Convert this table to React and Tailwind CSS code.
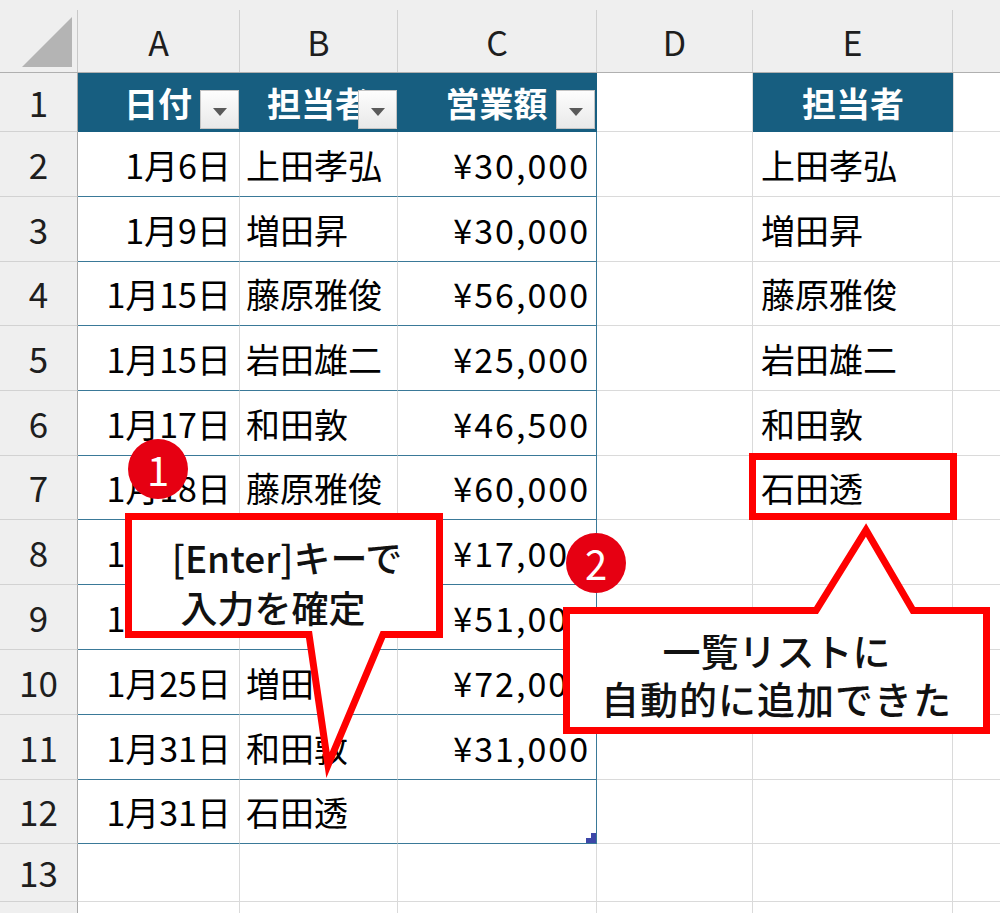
const font = "font-['Noto_Sans_CJK_JP',sans-serif]";

const rows = [
  { h: 'h-[65px]', a: '1月6日', b: '上田孝弘', c: '¥30,000', e: '上田孝弘' },
  { h: 'h-[65px]', a: '1月9日', b: '増田昇', c: '¥30,000', e: '増田昇' },
  { h: 'h-[64px]', a: '1月15日', b: '藤原雅俊', c: '¥56,000', e: '藤原雅俊' },
  { h: 'h-[65px]', a: '1月15日', b: '岩田雄二', c: '¥25,000', e: '岩田雄二' },
  { h: 'h-[65px]', a: '1月17日', b: '和田敦', c: '¥46,500', e: '和田敦' },
  { h: 'h-[64px]', a: '1月18日', b: '藤原雅俊', c: '¥60,000', e: '石田透' },
  { h: 'h-[65px]', a: '1月20日', b: '岩田雄二', c: '¥17,000', e: '' },
  { h: 'h-[65px]', a: '1月22日', b: '上田孝弘', c: '¥51,000', e: '' },
  { h: 'h-[65px]', a: '1月25日', b: '増田昇', c: '¥72,000', e: '' },
  { h: 'h-[65px]', a: '1月31日', b: '和田敦', c: '¥31,000', e: '' },
  { h: 'h-[64px]', a: '1月31日', b: '石田透', c: '', e: '', last: true },
];

const RowHead = ({ children }) => (
  <div className="w-[78px] shrink-0 bg-[#efefef] border-r border-b border-r-[#a9a9a9] border-b-[#d2d2d2] flex items-center justify-center text-[35px] text-[#1e1e1e]">
    {children}
  </div>
);

const FilterButton = ({ right }) => (
  <div className={`absolute ${right} top-[17px] w-[39px] h-[39px] border border-[#c4c4c4] bg-gradient-to-b from-[#fdfdfd] to-[#e9e9e9] flex items-center justify-center`}>
    <div className="mt-[4px] w-0 h-0 border-l-[7px] border-r-[7px] border-t-[8px] border-l-transparent border-r-transparent border-t-[#5a5a5a]" />
  </div>
);

const App = () => {
  return (
    <div className={`relative w-[1000px] h-[913px] overflow-hidden bg-white text-black ${font}`}>
      {/* column headers */}
      <div className="flex h-[73px] bg-[#efefef] border-b border-[#b0b0b0]">
        <div className="w-[78px] shrink-0 mt-[10px] border-r border-[#c8c8c8] relative">
          <svg className="absolute left-0 top-0" width="78" height="63" viewBox="0 0 78 63">
            <polygon points="22,57 72,57 72,7" fill="#b4b4b4" />
          </svg>
        </div>
        {[
          ['A', 'w-[162px]'],
          ['B', 'w-[158px]'],
          ['C', 'w-[199px]'],
          ['D', 'w-[156px]'],
          ['E', 'w-[200px]'],
        ].map(([l, w]) => (
          <div key={l} className={`${w} shrink-0 mt-[10px] border-r border-[#d0d0d0] flex items-center justify-center text-[34px] text-[#1e1e1e]`}>
            {l}
          </div>
        ))}
        <div className="flex-1 mt-[10px]" />
      </div>

      {/* row 1 : table header */}
      <div className="flex h-[59px]">
        <RowHead>1</RowHead>
        <div className="relative w-[162px] shrink-0 bg-[#175e80] border-b border-[#175e80] flex items-center justify-center pr-[2px] text-[34px] font-bold text-white">
          日付
          <FilterButton right="right-[1px]" />
        </div>
        <div className="relative w-[158px] shrink-0 bg-[#175e80] border-b border-[#175e80] flex items-center justify-center pr-[2px] text-[34px] font-bold text-white">
          担当者
          <FilterButton right="right-[1px]" />
        </div>
        <div className="relative w-[199px] shrink-0 bg-[#175e80] border-b border-[#175e80] flex items-center justify-center pr-[2px] text-[34px] font-bold text-white">
          営業額
          <FilterButton right="right-[2px]" />
        </div>
        <div className="w-[156px] shrink-0 border-r border-b border-[#dadada]" />
        <div className="w-[200px] shrink-0 bg-[#175e80] border-b border-[#175e80] flex items-center justify-center text-[34px] font-bold text-white">
          担当者
        </div>
        <div className="flex-1 border-l border-b border-[#dadada]" />
      </div>

      {/* rows 2-12 */}
      {rows.map((r, i) => (
        <div key={i} className={`flex ${r.h} text-[34px]`}>
          <RowHead>{i + 2}</RowHead>
          <div className="w-[162px] shrink-0 border-r border-b border-r-[#d9d9d9] border-b-[#3a7998] flex items-center justify-end pr-[8px]">
            {r.a}
          </div>
          <div className="w-[158px] shrink-0 border-r border-b border-r-[#d9d9d9] border-b-[#3a7998] flex items-center pl-[6px] whitespace-nowrap overflow-hidden">
            {r.b}
          </div>
          <div className="relative w-[199px] shrink-0 border-r border-b border-[#3a7998] flex items-center justify-end pr-[6px] tracking-[2px]">
            {r.c}
            {r.last && (
              <div className="absolute right-0 bottom-0 flex flex-col items-end">
                <div className="w-[5px] h-[5px] bg-[#3d47a8]" />
                <div className="w-[10px] h-[5px] bg-[#3d47a8]" />
              </div>
            )}
          </div>
          <div className="w-[156px] shrink-0 border-r border-b border-[#dadada]" />
          <div className="w-[200px] shrink-0 border-r border-b border-[#dadada] flex items-center pl-[8px]">
            {r.e}
          </div>
          <div className="flex-1 border-b border-[#dadada]" />
        </div>
      ))}

      {/* rows 13-14 */}
      {['13', ''].map((n, i) => (
        <div key={i} className="flex h-[58px] text-[34px]">
          <RowHead>{n}</RowHead>
          <div className="w-[162px] shrink-0 border-r border-b border-[#dadada]" />
          <div className="w-[158px] shrink-0 border-r border-b border-[#dadada]" />
          <div className="w-[199px] shrink-0 border-r border-b border-[#dadada]" />
          <div className="w-[156px] shrink-0 border-r border-b border-[#dadada]" />
          <div className="w-[200px] shrink-0 border-r border-b border-[#dadada]" />
          <div className="flex-1 border-b border-[#dadada]" />
        </div>
      ))}

      {/* highlight around E7 */}
      <div className="absolute left-[749px] top-[453px] w-[208px] h-[67px] border-[7px] border-[#ff0000]" />

      {/* callout shapes */}
      <svg className="absolute left-0 top-0 pointer-events-none" width="1000" height="913" viewBox="0 0 1000 913">
        <path
          d="M128.5 516.5 H439.5 V634.5 H383 L328 765 L309 634.5 H128.5 Z"
          fill="#fff"
          stroke="#ff0000"
          strokeWidth="7"
          strokeMiterlimit="10"
        />
        <path
          d="M566.5 610.5 H816 L866 530 L913 610.5 H986.5 V730.5 H566.5 Z"
          fill="#fff"
          stroke="#ff0000"
          strokeWidth="7"
          strokeMiterlimit="10"
        />
      </svg>

      {/* callout texts */}
      <div className="absolute left-[125px] top-[532px] w-[318px] flex flex-col items-center text-[37px] leading-[50px] font-medium text-[#111]">
        <div className="pl-[6px]">[Enter]キーで</div>
        <div className="pr-[22px]">入力を確定</div>
      </div>
      <div className="absolute left-[563px] top-[626px] w-[427px] flex flex-col items-center text-[38px] leading-[48px] font-medium text-[#111]">
        <div>一覧リストに</div>
        <div className="tracking-[1px]">自動的に追加できた</div>
      </div>

      {/* step badges */}
      <div className="absolute left-[128px] top-[439px] w-[60px] h-[60px] rounded-full bg-[#e60012] flex items-center justify-center text-white text-[40px] leading-none">
        1
      </div>
      <div className="absolute left-[566px] top-[533px] w-[60px] h-[60px] rounded-full bg-[#e60012] flex items-center justify-center text-white text-[40px] leading-none">
        2
      </div>
    </div>
  );
};

export default App;
